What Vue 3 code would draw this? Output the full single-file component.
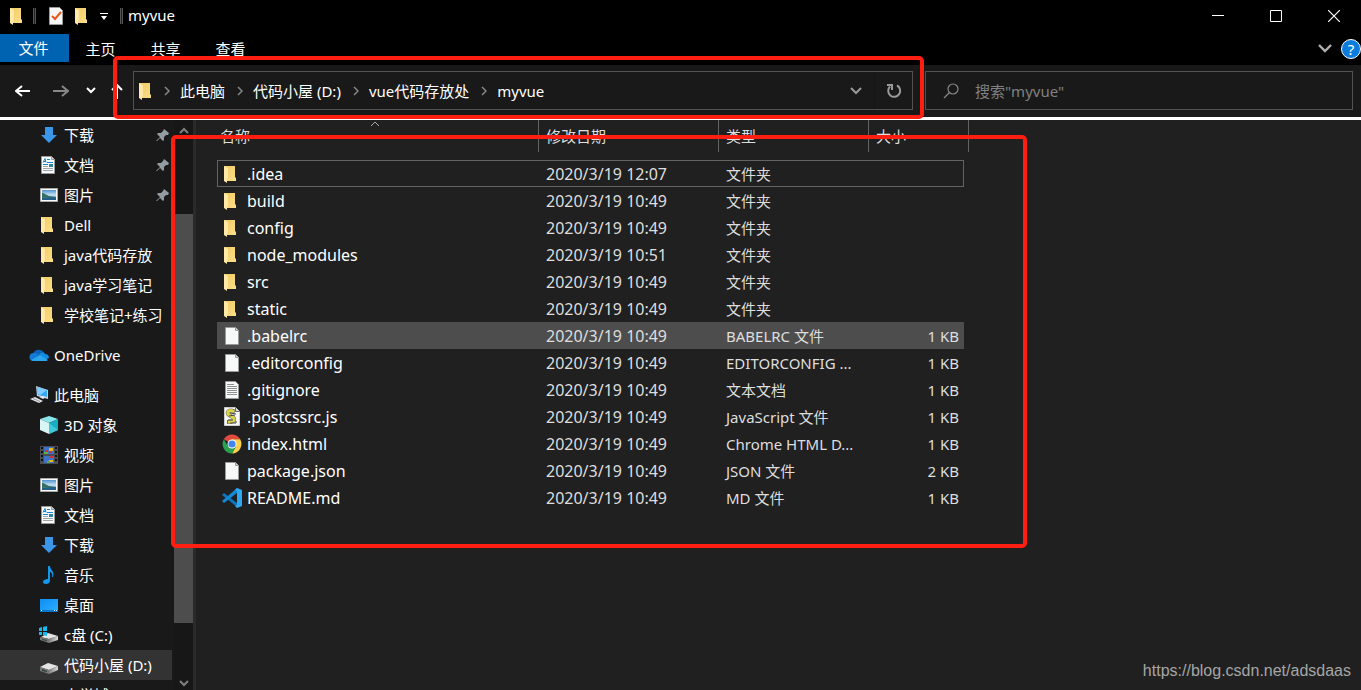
<script setup>
import { ref } from 'vue'

const search = ref('')
const tabs = ['主页', '共享', '查看']
const crumbs = ['此电脑', '代码小屋 (D:)', 'vue代码存放处', 'myvue']

const groups = [
  {
    items: [
      { label: '下载', icon: 'download', pinned: true },
      { label: '文档', icon: 'doc', pinned: true },
      { label: '图片', icon: 'picture', pinned: true },
      { label: 'Dell', icon: 'folder' },
      { label: 'java代码存放', icon: 'folder' },
      { label: 'java学习笔记', icon: 'folder' },
      { label: '学校笔记+练习', icon: 'folder' },
    ],
  },
  { items: [{ label: 'OneDrive', icon: 'cloud', top: true }] },
  {
    items: [
      { label: '此电脑', icon: 'pc', top: true },
      { label: '3D 对象', icon: 'cube' },
      { label: '视频', icon: 'film' },
      { label: '图片', icon: 'picture' },
      { label: '文档', icon: 'doc' },
      { label: '下载', icon: 'download' },
      { label: '音乐', icon: 'music' },
      { label: '桌面', icon: 'desktop' },
      { label: 'c盘 (C:)', icon: 'sysdrive' },
      { label: '代码小屋 (D:)', icon: 'drive', active: true },
      { label: '大学城', icon: '' },
    ],
  },
]

const files = [
  { name: '.idea', date: '2020/3/19 12:07', type: '文件夹', size: '', icon: 'folder', state: 'focused' },
  { name: 'build', date: '2020/3/19 10:49', type: '文件夹', size: '', icon: 'folder' },
  { name: 'config', date: '2020/3/19 10:49', type: '文件夹', size: '', icon: 'folder' },
  { name: 'node_modules', date: '2020/3/19 10:51', type: '文件夹', size: '', icon: 'folder' },
  { name: 'src', date: '2020/3/19 10:49', type: '文件夹', size: '', icon: 'folder' },
  { name: 'static', date: '2020/3/19 10:49', type: '文件夹', size: '', icon: 'folder' },
  { name: '.babelrc', date: '2020/3/19 10:49', type: 'BABELRC 文件', size: '1 KB', icon: 'file', state: 'hovered' },
  { name: '.editorconfig', date: '2020/3/19 10:49', type: 'EDITORCONFIG ...', size: '1 KB', icon: 'file' },
  { name: '.gitignore', date: '2020/3/19 10:49', type: '文本文档', size: '1 KB', icon: 'text' },
  { name: '.postcssrc.js', date: '2020/3/19 10:49', type: 'JavaScript 文件', size: '1 KB', icon: 'script' },
  { name: 'index.html', date: '2020/3/19 10:49', type: 'Chrome HTML D...', size: '1 KB', icon: 'chrome' },
  { name: 'package.json', date: '2020/3/19 10:49', type: 'JSON 文件', size: '2 KB', icon: 'file' },
  { name: 'README.md', date: '2020/3/19 10:49', type: 'MD 文件', size: '1 KB', icon: 'vscode' },
]
</script>

<template>
  <div class="window">
    <svg class="sprite" aria-hidden="true">
      <defs>
        <linearGradient id="g-folder" x1="0" x2="1" y1="0" y2="1">
          <stop offset="0" stop-color="#f2cb62" /><stop offset="1" stop-color="#fbdf8b" />
        </linearGradient>
        <linearGradient id="g-blue" x1="0" x2="1" y1="0" y2="1">
          <stop offset="0" stop-color="#0f8ff0" /><stop offset=".55" stop-color="#1ea0fb" /><stop offset="1" stop-color="#35b2ff" />
        </linearGradient>
        <linearGradient id="g-sky" x1="0" x2="0" y1="0" y2="1">
          <stop offset="0" stop-color="#4f93cf" /><stop offset=".5" stop-color="#c7e2f3" /><stop offset="1" stop-color="#3b7690" />
        </linearGradient>
        <linearGradient id="g-drive" x1="0" x2="1">
          <stop offset="0" stop-color="#7e7e7e" /><stop offset="1" stop-color="#d9d9d9" />
        </linearGradient>
      </defs>
      <symbol id="i-folder" viewBox="0 0 20 20">
        <path fill="url(#g-folder)" d="M2 2h11v11l1 1v3H2z" />
        <path fill="#ffe8a8" d="M2 2l4 2v11l-1 1v3l-3-2z" />
      </symbol>
      <symbol id="i-download" viewBox="0 0 20 20">
        <path fill="#3a96e8" d="M6 2h8v8h4l-8 8-8-8h4z" />
      </symbol>
      <symbol id="i-doc" viewBox="0 0 20 20">
        <path fill="#f8fafb" stroke="#9a9a9a" d="M2.500 1.500h10l3 3v14h-13z" />
        <path fill="#d5d5d5" stroke="#9a9a9a" d="M12.500 1.500v3h3" />
        <path stroke="#1687d0" fill="none" d="M4 7.500l2-4 1 4M5 6.500h2M8 4.500h3M8 7.500h6M4 9.500h5" />
        <path stroke="#9fa6ab" d="M4 11.500h5M4 13.500h10M4 15.500h10" />
        <path fill="#3182a9" d="M10 9h4v3h-4z" />
      </symbol>
      <symbol id="i-picture" viewBox="0 0 20 20">
        <path fill="#fafafa" stroke="#aaa" d="M1.500 3.500h17v13h-17z" />
        <path fill="url(#g-sky)" d="M3 5h14v10H3z" />
        <path fill="#357062" d="M3 8c3 0 4 2 7 3l7 1v1c-5 1-9-1-14 0z" />
        <path fill="#24618a" d="M3 13l14-1v3H3z" />
      </symbol>
      <symbol id="i-cloud" viewBox="0 0 20 20">
        <path fill="#0b64b8" d="M4 9a6 6 0 0 1 11-1l-4 5z" />
        <path fill="#1279d4" d="M4 16a4 4 0 0 1 1-8c3 0 5 2 7 4z" />
        <path fill="#168adf" d="M10 10c2-3 5-3 6-1 3 0 4 2 4 4l-5 2z" />
        <path fill="#2ba5ee" d="M2 15l9-5 8 5c-1 1-2 1-3 1H4z" />
      </symbol>
      <symbol id="i-pc" viewBox="0 0 20 20">
        <path fill="#c9d3dc" d="M7 1l12 4v9L8 11z" />
        <path fill="#36a7f3" d="M8 2l10 3v7L9 10z" />
        <path fill="#7ecbff" d="M8 2l10 3-7 5-2-1z" />
        <path fill="#e3e5e8" d="M1 14l5-2 8 4-4 2zM10 12l3-1 4 1-3 2z" />
        <path stroke="#8d959c" d="M4 13.500l7 3" />
      </symbol>
      <symbol id="i-cube" viewBox="0 0 20 20">
        <path fill="#8be6ec" d="M10 1l9 3-9 4-9-4z" />
        <path fill="#d8f6f6" d="M1 4l9 4v11l-9-4z" />
        <path fill="#15aec4" d="M19 4l-9 4v11l9-4z" />
        <path fill="#3fc9db" d="M10 8l9 7-9 4z" />
      </symbol>
      <symbol id="i-film" viewBox="0 0 20 20">
        <path fill="#4a4e54" d="M1 1h18v18H1z" />
        <path stroke="#101010" stroke-width="2" stroke-dasharray="2 2" d="M3 2v16M17 2v16" />
        <path fill="#3d72c9" d="M5 2h10v7H5zM5 11h10v7H5z" />
        <path fill="#e8b71d" d="M10 3h4v3h-4zM10 15h4v2h-4z" />
        <path fill="#cf3434" d="M6 5h3v2H6zM10 6h3v2h-3zM11 11h3v2h-3z" />
        <path fill="#5fae3b" d="M5 7h4v2H5zM8 16h3v2H8z" />
      </symbol>
      <symbol id="i-music" viewBox="0 0 20 20">
        <path fill="#1498ee" d="M9 1h2c0 4 5 5 3 11h-1c1-3-1-5-2-5v8c0 3-2 4-4 4s-3-1-3-2c0-2 3-3 5-3z" />
      </symbol>
      <symbol id="i-desktop" viewBox="0 0 20 20">
        <path fill="url(#g-blue)" d="M1 4h18v13H1z" />
        <path fill="#0875cc" d="M1 15h18v2H1z" />
        <path stroke="#d9f0ff" d="M2 15.500h1M15 15.500h1M17 15.500h1" />
      </symbol>
      <symbol id="i-drive" viewBox="0 0 20 20">
        <path fill="#e4e4e4" d="M1 12l8-4 10 3-9 4z" />
        <path fill="#777" d="M1 12l9 3v4l-9-3z" />
        <path fill="url(#g-drive)" d="M10 15l9-4v4l-9 4z" />
        <path fill="#2b4434" d="M3 14l5 2v1l-5-1z" />
      </symbol>
      <symbol id="i-sysdrive" viewBox="0 0 20 20">
        <path fill="#e4e4e4" d="M2 12l7-4 10 3-9 3z" />
        <path fill="#777" d="M1 12l9 2v4l-9-3z" />
        <path fill="url(#g-drive)" d="M10 14l9-3v4l-9 3z" />
        <path fill="#2b4434" d="M3 14l5 1v1l-5-1z" />
        <path fill="#13b9ef" d="M0 3l3-1v4H0zM4 2l4-1v5H4zM0 7h3v3H0zM4 7h4v4l-4-1z" />
      </symbol>
      <symbol id="i-file" viewBox="0 0 20 20">
        <path fill="#f7f8f8" stroke="#999" d="M3.500 1.500h10l3 3v14h-13z" />
        <path fill="#d4d4d4" stroke="#999" d="M13.500 1.500v3h3" />
      </symbol>
      <symbol id="i-text" viewBox="0 0 20 20">
        <path fill="#f7f8f8" stroke="#999" d="M3.500 1.500h10l3 3v14h-13z" />
        <path stroke="#909090" d="M5 4.500h7M5 6.500h10M5 8.500h10M5 10.500h10M5 12.500h10M5 14.500h10" />
      </symbol>
      <symbol id="i-script" viewBox="0 0 20 20">
        <path fill="#f8f8f8" stroke="#ccc" d="M2.500 .5h11l4 4v14h-15z" />
        <path fill="#ddd" stroke="#666" d="M13.500 .5v4h4" />
        <path fill="none" stroke="#666" stroke-width="4" d="M13 5C9 2 5 4 6 7c2 3 7 2 6 6-1 2-4 2-7 2" />
        <path fill="none" stroke="#ddd548" stroke-width="3" d="M12 5C9 2 5 4 6 7c2 3 7 2 6 6-1 2-4 2-6 2" />
        <path fill="none" stroke="#444" d="M8 6l6 1M7 9l6-1M6 13h5M8 16h6v-2" />
      </symbol>
      <symbol id="i-chrome" viewBox="0 0 20 20">
        <path fill="#e04a3f" d="M10 10L1.800 5.300A9.500 9.500 0 0 1 18.200 5.300H10z" />
        <path fill="#fdd04b" d="M10 10V5.300h8.200A9.500 9.500 0 0 1 10 19.500l4-7.200z" />
        <path fill="#2aa150" d="M10 10l4 2.300-4 7.200A9.500 9.500 0 0 1 1.800 5.300l4.200 7z" />
        <circle cx="10" cy="10" r="4.500" fill="#fff" />
        <circle cx="10" cy="10" r="3.600" fill="#4286f0" />
      </symbol>
      <symbol id="i-vscode" viewBox="0 0 20 20">
        <path fill="#0d74bf" d="M0 7l2-2 13 10v4z" />
        <path fill="#1389d6" d="M0 13l2 2L15 5V0z" />
        <path fill="#2fa8f4" d="M15 0l5 2v16l-5 2-2-2 2-1V3l-2-1z" />
      </symbol>
      <symbol id="i-pin" viewBox="0 0 14 14">
        <path fill="#939ca3" d="M8 1l5 4-1 2h-2l-2 2v3l-1 1-3-3-3 3H0l4-4-3-3 1-1h3l2-2z" />
      </symbol>
    </svg>

    <header class="titlebar">
      <svg class="icon"><use href="#i-folder" /></svg>
      <span class="divider"></span>
      <button class="quick check" aria-label="属性">
        <svg width="16" height="20" viewBox="0 0 16 20">
          <path fill="#f7f7f7" stroke="#999" d="M1.500 1.500h10l3 3v14h-13z" />
          <path fill="none" stroke="#e8561c" stroke-width="2" d="M4 10l3 3 6-7" />
        </svg>
      </button>
      <button class="quick" aria-label="新建文件夹"><svg class="icon"><use href="#i-folder" /></svg></button>
      <button class="quick drop" aria-label="自定义快速访问工具栏">
        <svg width="8" height="8" viewBox="0 0 8 8"><path fill="#fff" d="M0 1h8v1H0zM1 4h6L4 8z" /></svg>
      </button>
      <span class="divider"></span>
      <h1>myvue</h1>
      <div class="controls">
        <button aria-label="最小化"><svg width="12" height="12" viewBox="0 0 12 12"><path stroke="#fff" d="M0 5.500h12" /></svg></button>
        <button aria-label="最大化"><svg width="12" height="12" viewBox="0 0 12 12"><path fill="none" stroke="#fff" d="M.5.5h11v11H.5z" /></svg></button>
        <button aria-label="关闭"><svg width="12" height="12" viewBox="0 0 12 12"><path stroke="#fff" stroke-width="1.200" d="M0 0l12 12M12 0L0 12" /></svg></button>
      </div>
    </header>

    <nav class="tabs">
      <button class="file-tab">文件</button>
      <button v-for="tab in tabs" :key="tab" class="tab">{{ tab }}</button>
      <div class="ribbon-end">
        <button aria-label="展开功能区">
          <svg width="14" height="10" viewBox="0 0 14 10"><path fill="none" stroke="#b0b0b0" stroke-width="2.400" d="M1 1l6 6 6-6" /></svg>
        </button>
        <button class="help" aria-label="帮助">?</button>
      </div>
    </nav>

    <div class="navbar">
      <div class="history">
        <button aria-label="后退"><svg width="16" height="12" viewBox="0 0 16 12"><path fill="none" stroke="#fff" stroke-width="2" d="M15 6H1M7 1L1 6l6 5" /></svg></button>
        <button aria-label="前进"><svg width="16" height="12" viewBox="0 0 16 12"><path fill="none" stroke="#888" stroke-width="2" d="M0 6h14M9 1l6 5-6 5" /></svg></button>
        <button class="narrow" aria-label="最近位置"><svg width="10" height="7" viewBox="0 0 10 7"><path fill="none" stroke="#fff" stroke-width="2" d="M1 1l4 4 4-4" /></svg></button>
        <button class="up" aria-label="上移"><svg width="12" height="16" viewBox="0 0 12 16"><path fill="none" stroke="#fff" stroke-width="2" d="M6 16V2M1 7l5-5 5 5" /></svg></button>
      </div>
      <div class="address">
        <svg class="icon"><use href="#i-folder" /></svg>
        <ol>
          <li v-for="crumb in crumbs" :key="crumb">
            <svg width="6" height="10" viewBox="0 0 6 10"><path fill="none" stroke="#888" stroke-width="1.500" d="M1 1l4 4-4 4" /></svg>
            <a href="#">{{ crumb }}</a>
          </li>
        </ol>
        <button class="open" aria-label="以前的位置"><svg width="12" height="8" viewBox="0 0 12 8"><path fill="none" stroke="#999" stroke-width="2" d="M1 1l5 5 5-5" /></svg></button>
        <button class="refresh" aria-label="刷新">
          <svg width="16" height="16" viewBox="0 0 16 16"><path fill="none" stroke="#999" stroke-width="2" d="M11 2.500A6 6 0 1 1 4 3.500M1 2h5v5" /></svg>
        </button>
      </div>
      <label class="search">
        <svg width="16" height="16" viewBox="0 0 16 16"><circle cx="10" cy="6" r="5" fill="none" stroke="#888" stroke-width="1.200" /><path stroke="#888" stroke-width="1.200" d="M6.500 9.500L1 15" /></svg>
        <input v-model="search" type="text" placeholder="搜索&quot;myvue&quot;" aria-label="搜索" />
      </label>
    </div>

    <div class="body">
      <aside class="sidebar">
        <ul v-for="(group, g) in groups" :key="g">
          <li v-for="item in group.items" :key="item.label">
            <a href="#" :class="{ top: item.top, active: item.active }">
              <svg class="icon"><use v-if="item.icon" :href="'#i-' + item.icon" /></svg>
              <span>{{ item.label }}</span>
              <svg v-if="item.pinned" class="pin"><use href="#i-pin" /></svg>
            </a>
          </li>
        </ul>
      </aside>
      <div class="scrollbar">
        <svg width="10" height="7" viewBox="0 0 10 7"><path fill="none" stroke="#808080" stroke-width="2" d="M1 6l4-4 4 4" /></svg>
        <div class="track"><div class="thumb"></div></div>
        <svg width="10" height="7" viewBox="0 0 10 7"><path fill="none" stroke="#808080" stroke-width="2" d="M1 1l4 4 4-4" /></svg>
      </div>

      <main class="content">
        <table>
          <colgroup>
            <col class="c-name" /><col class="c-date" /><col class="c-type" /><col class="c-size" /><col class="c-end" />
          </colgroup>
          <thead>
            <tr>
              <th aria-sort="ascending">
                <button class="first">
                  名称
                  <svg class="sort" width="10" height="6" viewBox="0 0 10 6"><path fill="none" stroke="#aaa" d="M1 5l4-4 4 4" /></svg>
                </button>
              </th>
              <th><button>修改日期</button></th>
              <th><button>类型</button></th>
              <th colspan="2"><button>大小</button></th>
            </tr>
          </thead>
          <tbody>
            <tr v-for="file in files" :key="file.name" :class="file.state">
              <td class="name">
                <div><svg class="icon"><use :href="'#i-' + file.icon" /></svg><span>{{ file.name }}</span></div>
              </td>
              <td class="date">{{ file.date }}</td>
              <td>{{ file.type }}</td>
              <td class="size">{{ file.size }}</td>
              <td class="end"></td>
            </tr>
          </tbody>
        </table>
        <p class="watermark">https://blog.csdn.net/adsdaas</p>
      </main>
    </div>

    <div class="mark mark-path"></div>
    <div class="mark mark-files"></div>
  </div>
</template>

<style>
body {
  margin: 0;
  background: #202020;
}
</style>

<style scoped>
.window {
  position: relative;
  display: flex;
  flex-direction: column;
  height: 100vh;
  overflow: hidden;
  background: #000;
  color: #fff;
  font: 15px/20px "Noto Sans", "Noto Sans CJK SC", sans-serif;
}
.sprite {
  position: absolute;
  width: 0;
  height: 0;
}
button {
  padding: 0;
  border: 0;
  background: none;
  color: inherit;
  font: inherit;
  display: flex;
  align-items: center;
  justify-content: center;
}
a {
  color: inherit;
  text-decoration: none;
}
ul, ol {
  list-style: none;
  margin: 0;
  padding: 0;
}
.icon {
  width: 20px;
  height: 20px;
  flex: none;
}

.titlebar {
  display: flex;
  align-items: center;
  flex: none;
  height: 34px;
  padding-left: 8px;
}
.titlebar > * {
  margin-bottom: 3px;
}
.titlebar h1 {
  margin: 0 0 4px 5px;
  font-size: 15px;
  font-weight: 400;
}
.divider {
  width: 1px;
  height: 16px;
  margin-left: 5px;
  border: 1px solid #555;
  border-width: 0 1px;
  background: #222;
}
.check {
  margin-left: 12px;
}
.quick + .quick {
  margin-left: 9px;
}
.titlebar .quick + .drop {
  margin-left: 7px;
}
.drop + .divider {
  margin-left: 12px;
}
.controls {
  display: flex;
  align-self: stretch;
  margin-left: auto;
}
.controls button {
  width: 58px;
}
.controls button:last-child {
  width: 56px;
  padding-left: 2px;
}

.tabs {
  display: flex;
  flex: none;
  height: 31px;
}
.tabs .file-tab {
  width: 69px;
  height: 28px;
  padding-right: 2px;
  background: #0063b1;
}
.tab {
  width: 65px;
  height: 30px;
  padding-right: 2px;
}
.ribbon-end {
  display: flex;
  align-items: center;
  gap: 9px;
  height: 29px;
  margin-left: auto;
}
.help {
  box-sizing: border-box;
  width: 20px;
  height: 20px;
  border: 1px solid #fff;
  border-radius: 50%;
  background: #0b7bdc;
}

.navbar {
  display: flex;
  align-items: center;
  flex: none;
  height: 51px;
  padding: 0 8px 1px 0;
  background: #191919;
  border-bottom: 3px solid #fff;
}
.history {
  display: flex;
  flex: none;
  width: 133px;
  padding-left: 4px;
  box-sizing: border-box;
}
.history button {
  width: 38px;
  height: 38px;
}
.history .narrow {
  width: 22px;
}
.history .up {
  width: 30px;
}
.address, .search {
  box-sizing: border-box;
  display: flex;
  align-items: center;
  height: 39px;
  border: 1px solid #535353;
}
.address {
  flex: 1;
  min-width: 0;
  padding-left: 3px;
}
.address ol {
  display: flex;
  flex: 1;
  margin-left: 7px;
}
.address li {
  display: flex;
  align-items: center;
  gap: 10px;
  margin-right: 12px;
}
.open {
  width: 36px;
  height: 37px;
}
.refresh {
  width: 38px;
  height: 37px;
  border-left: 1px solid #151515;
}
.search {
  width: 428px;
  margin-left: 12px;
  padding-left: 17px;
  gap: 16px;
}
.search input {
  flex: 1;
  min-width: 0;
  padding: 0;
  border: 0;
  outline: 0;
  background: none;
  color: #fff;
  font: inherit;
}
.search input::placeholder {
  color: #808080;
  opacity: 1;
}

.body {
  display: flex;
  flex: 1;
  min-height: 0;
  background: #202020;
}
.sidebar {
  width: 174px;
  flex: none;
  overflow: hidden;
  background: #191919;
}
.sidebar ul + ul {
  margin-top: 10px;
}
.sidebar li {
  height: 30px;
  padding-right: 2px;
}
.sidebar a {
  display: flex;
  align-items: center;
  gap: 5px;
  height: 30px;
  padding-left: 39px;
  white-space: nowrap;
}
.sidebar a.top {
  padding-left: 29px;
}
.sidebar a.active {
  background: #333;
}
.pin {
  width: 14px;
  height: 14px;
  margin: 0 2px 0 auto;
}
.scrollbar {
  display: flex;
  flex-direction: column;
  align-items: center;
  width: 19px;
  flex: none;
  padding: 7px 0 3px;
  box-sizing: border-box;
  background: #171717;
}
.track {
  flex: 1;
  align-self: stretch;
  display: grid;
  grid-template-rows: 80fr 409fr 57fr;
}
.thumb {
  grid-row: 2;
  background: #4d4d4d;
}
.content {
  position: relative;
  flex: 1;
  min-width: 0;
  padding-left: 21px;
  border-left: 3px solid #2a2a2a;
}

table {
  table-layout: fixed;
  width: 752px;
  border-spacing: 0;
  color: #dedede;
}
.c-name { width: 322px; }
.c-date { width: 180px; }
.c-type { width: 150px; }
.c-size { width: 95px; }
.c-end { width: 5px; }
th {
  height: 40px;
  padding: 0;
  font-weight: 400;
  vertical-align: top;
}
th button {
  position: relative;
  width: 100%;
  height: 32px;
  padding-left: 7px;
  justify-content: flex-start;
  border-right: 1px solid #636363;
}
th .first {
  padding-left: 3px;
}
.sort {
  position: absolute;
  top: 1px;
  left: 153px;
}
td {
  box-sizing: border-box;
  height: 27px;
  padding: 0 0 0 7px;
  white-space: nowrap;
}
td.name {
  padding-left: 5px;
  color: #fff;
  font-size: 16px;
}
.name div {
  display: flex;
  align-items: center;
  gap: 5px;
}
td.date {
  font-size: 16px;
}
td.size {
  padding: 0 5px 0 0;
  text-align: right;
}
td.end {
  padding: 0;
}
.hovered td:not(.end) {
  background: #4d4d4d;
}
.focused td:not(.end) {
  border: 0 solid #636363;
  border-width: 1px 0;
}
.focused td.name {
  padding-left: 4px;
  border-left-width: 1px;
}
.focused td.size {
  border-right-width: 1px;
}
.watermark {
  position: absolute;
  right: 10px;
  bottom: 9px;
  margin: 0;
  color: #a6a6a6;
  font: 16px/20px "Liberation Sans", Arial, sans-serif;
}

.mark {
  position: absolute;
  box-sizing: border-box;
  border: 4px solid #ff1e10;
  border-radius: 5px;
  pointer-events: none;
}
.mark-path {
  top: 56px;
  left: 113px;
  right: 437px;
  height: 63px;
}
.mark-files {
  top: 135px;
  left: 171px;
  width: 856px;
  height: 413px;
}
</style>
